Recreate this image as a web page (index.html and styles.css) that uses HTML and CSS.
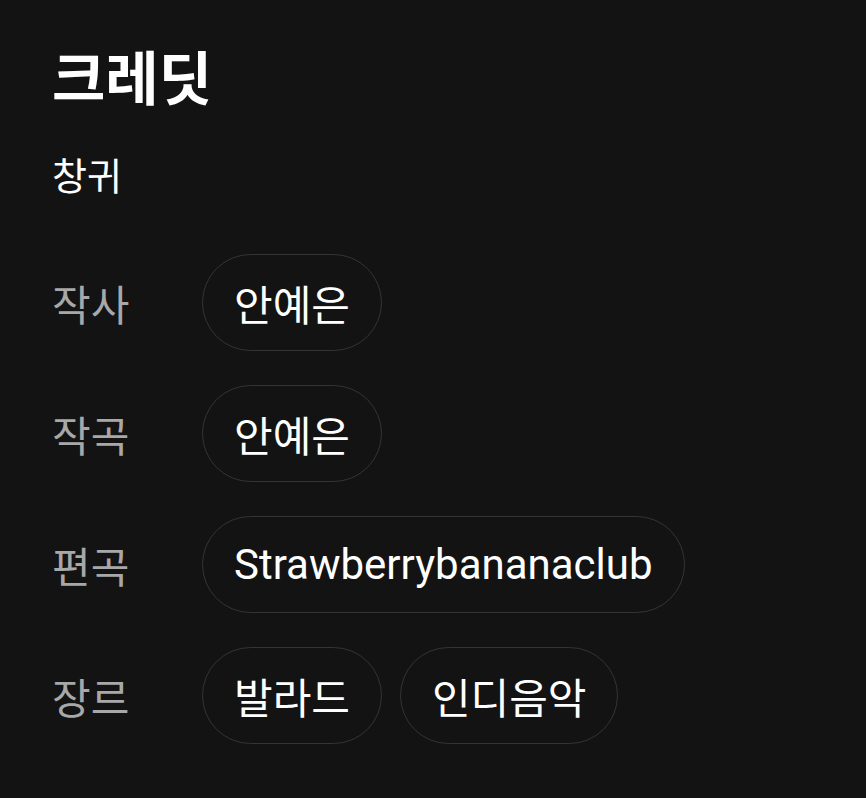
FILE: index.html
```html
<!DOCTYPE html>
<html lang="ko">
  <head>
    <meta charset="UTF-8" />
    <meta name="viewport" content="width=device-width, initial-scale=1.0" />
    <title>크레딧</title>
    <link rel="stylesheet" href="styles.css">
  </head>
  <body>
    <section class="credits">
      <h1 class="title">크레딧</h1>
      <p class="song">창귀</p>

      <div class="row">
        <span class="label">작사</span>
        <div class="chips">
          <span class="chip">안예은</span>
        </div>
      </div>
      <div class="row">
        <span class="label">작곡</span>
        <div class="chips">
          <span class="chip">안예은</span>
        </div>
      </div>
      <div class="row">
        <span class="label">편곡</span>
        <div class="chips">
          <span class="chip">Strawberrybananaclub</span>
        </div>
      </div>
      <div class="row">
        <span class="label">장르</span>
        <div class="chips">
          <span class="chip">발라드</span>
          <span class="chip">인디음악</span>
        </div>
      </div>
    </section>
  </body>
</html>
```

FILE: styles.css
```css
body {
  margin: 0;
  background-color: #131313;
  color: #fff;
  font-family: Roboto, "Noto Sans CJK KR", sans-serif;
}
.credits {
  padding: 40px 52px 0;
}
.title {
  margin: 0;
  font-size: 58px;
  font-weight: 700;
  line-height: 80px;
}
.song {
  margin: 33px 0 53px;
  font-size: 38px;
  line-height: 48px;
}
.row {
  display: flex;
  align-items: center;
  margin-bottom: 34px;
}
.label {
  width: 150px;
  flex-shrink: 0;
  font-size: 42px;
  color: #a8a8a8;
}
.chips {
  display: flex;
  gap: 18px;
}
.chip {
  display: flex;
  align-items: center;
  height: 95px;
  padding: 0 31px;
  border: 1px solid #343434;
  border-radius: 50px;
  font-size: 42px;
}
```
